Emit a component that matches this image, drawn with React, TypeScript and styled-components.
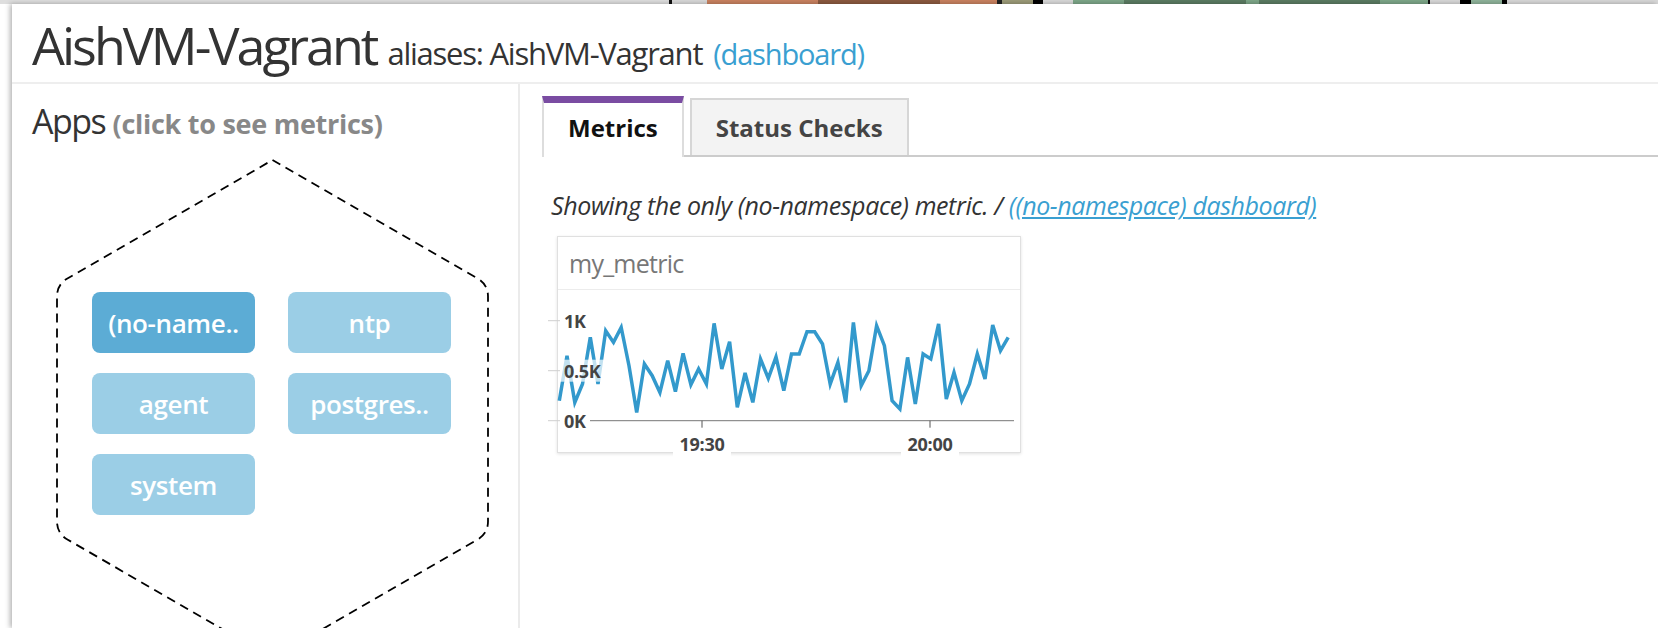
import React from "react";
import styled, { createGlobalStyle } from "styled-components";

const GlobalStyle = createGlobalStyle`
    html, body {
        margin: 0;
        padding: 0;
        background: #fff;
        font-family: "Open Sans", "Noto Sans", sans-serif;
        color: #333;
    }
`;

const Page = styled.div`
    width: 1658px;
    height: 628px;
    overflow: hidden;
    display: flex;
    flex-direction: column;
    background: #fff;
`;

const BackStrip = styled.div`
    display: flex;
    height: 4px;
    flex-shrink: 0;
`;

const StripPiece = styled.div<{ $w: number; $c: string }>`
    width: ${(p) => p.$w}px;
    background: ${(p) => p.$c};
`;

const Panel = styled.div`
    flex: 1;
    margin-left: 12px;
    background: #fff;
    box-shadow: -2px 0 5px rgba(0, 0, 0, 0.3);
    display: flex;
    flex-direction: column;
    min-height: 0;
`;

const Header = styled.div`
    height: 67px;
    padding: 11px 0 0 20px;
    border-bottom: 2px solid #eeeeee;
    display: flex;
    align-items: baseline;
    white-space: nowrap;
`;

const HostName = styled.span`
    font-size: 52px;
    line-height: 60px;
    letter-spacing: -0.057em;
    color: #333;
`;

const Aliases = styled.span`
    font-size: 31px;
    margin-left: 11px;
    letter-spacing: -0.04em;
    color: #333;
`;

const HeaderLink = styled.a`
    font-size: 29px;
    margin-left: 11px;
    letter-spacing: -0.04em;
    color: #3a9fd1;
    text-decoration: none;
`;

const Body = styled.div`
    flex: 1;
    display: flex;
    min-height: 0;
`;

const AppsColumn = styled.div`
    width: 508px;
    flex-shrink: 0;
    border-right: 2px solid #ebebeb;
    padding: 20px 0 0 20px;
    box-sizing: border-box;
`;

const AppsTitle = styled.div`
    font-size: 34px;
    line-height: 34px;
    letter-spacing: -0.045em;
    color: #333;
    white-space: nowrap;
`;

const AppsHint = styled.span`
    font-size: 27px;
    font-weight: 700;
    letter-spacing: -0.01em;
    color: #888;
`;

const Hive = styled.div`
    position: relative;
    width: 433px;
    height: 500px;
    margin: 18px 0 0 24px;
    padding: 133px 0 0 36px;
    box-sizing: border-box;
`;

const HiveOutline = styled.svg`
    position: absolute;
    left: 0;
    top: 0;
    width: 433px;
    height: 500px;
    overflow: visible;
`;

const AppGrid = styled.div`
    position: relative;
    display: grid;
    grid-template-columns: 163px 163px;
    grid-auto-rows: 61px;
    column-gap: 33px;
    row-gap: 20px;
`;

const AppButton = styled.button<{ $active?: boolean }>`
    border: none;
    border-radius: 8px;
    background: ${(p) => (p.$active ? "#5cacd5" : "#9bcee6")};
    color: #fff;
    font-family: "Open Sans", "Noto Sans", sans-serif;
    font-size: 26px;
    font-weight: 600;
    letter-spacing: -0.015em;
    cursor: pointer;
    padding: 0;
`;

const MetricsPane = styled.div`
    flex: 1;
    min-width: 0;
    display: flex;
    flex-direction: column;
`;

const TabBar = styled.div`
    display: flex;
    align-items: flex-end;
    margin: 12px 0 0 22px;
    border-bottom: 2px solid #cccccc;
    height: 59px;
    gap: 6px;
`;

const Tab = styled.div<{ $active?: boolean }>`
    box-sizing: border-box;
    height: ${(p) => (p.$active ? "61px" : "57px")};
    margin-bottom: ${(p) => (p.$active ? "-2px" : "0")};
    padding: 0 24px ${(p) => (p.$active ? "5px" : "0")};
    display: flex;
    align-items: center;
    justify-content: center;
    font-size: 24px;
    font-weight: 700;
    color: ${(p) => (p.$active ? "#111" : "#444")};
    background: ${(p) => (p.$active ? "#fff" : "#f3f3f3")};
    border: 2px solid ${(p) => (p.$active ? "#dddddd" : "#d6d6d6")};
    border-top: ${(p) => (p.$active ? "7px solid #7a4ca2" : "2px solid #d6d6d6")};
    border-bottom: none;
    white-space: nowrap;
`;

const Caption = styled.div`
    margin: 32px 0 0 31px;
    font-size: 25px;
    line-height: 32px;
    font-style: italic;
    letter-spacing: -0.016em;
    color: #333;
    white-space: nowrap;
`;

const CaptionLink = styled.a`
    color: #3a9fd1;
    text-decoration: underline;
`;

const Widget = styled.div`
    margin: 15px 0 0 37px;
    width: 464px;
    height: 217px;
    box-sizing: border-box;
    border: 1px solid #e0e0e0;
    box-shadow: 0 1px 3px rgba(0, 0, 0, 0.12);
    background: #fff;
    display: flex;
    flex-direction: column;
`;

const WidgetTitle = styled.div`
    height: 52px;
    flex-shrink: 0;
    border-bottom: 1px solid #ececec;
    padding-left: 11px;
    display: flex;
    align-items: center;
    font-size: 25px;
    letter-spacing: -0.03em;
    color: #777;
`;

const ChartSvg = styled.svg`
    display: block;
    overflow: visible;
    font-family: "Open Sans", "Noto Sans", sans-serif;
`;

const strip: [number, string][] = [
    [669, "#dedede"], [3, "#111"], [35, "#d8d8d8"], [111, "#c98260"], [122, "#8c5a40"],
    [57, "#c98260"], [5, "#222"], [31, "#9b9a78"], [10, "#000"], [30, "#d8d8d8"],
    [51, "#7da688"], [122, "#5b7b62"], [13, "#7da688"], [121, "#5b7b62"], [48, "#7da688"],
    [2, "#111"], [30, "#d8d8d8"], [11, "#000"], [31, "#8fb39a"], [5, "#000"], [151, "#d8d8d8"],
];

const apps = [
    { name: "(no-name..", active: true },
    { name: "ntp" },
    { name: "agent" },
    { name: "postgres.." },
    { name: "system" },
];

// values sampled off the original graph, 0..1000
const series = [
    200, 650, 183, 367, 833, 367, 900, 783, 933, 550, 83, 567, 450, 283, 600, 290, 673, 360, 517, 367,
    973, 517, 790, 133, 477, 183, 617, 423, 637, 300, 667, 667, 890, 890, 767, 367, 583, 183, 983, 350,
    500, 950, 750, 200, 117, 633, 167, 667, 617, 967, 217, 483, 200, 367, 667, 417, 957, 700, 833,
];

const yOf = (v: number) => 130.7 - v / 10;

function MetricChart() {
    const pts = series.map((v, i) => `${(1.3 + i * 7.74).toFixed(1)},${yOf(v).toFixed(1)}`).join(" ");
    const yTicks = [
        { v: 1000, label: "1K", w: 30 },
        { v: 500, label: "0.5K", w: 46 },
        { v: 0, label: "0K", w: 30 },
    ];
    const xTicks = [
        { x: 144, label: "19:30" },
        { x: 372, label: "20:00" },
    ];
    return (
        <ChartSvg width={462} height={162} viewBox="0 0 462 162">
            <line x1={32} y1={yOf(0)} x2={456} y2={yOf(0)} stroke="#777" strokeWidth={1} />
            {yTicks.map((t) => (
                <line key={t.label} x1={-10} y1={yOf(t.v)} x2={2} y2={yOf(t.v)} stroke="#cfcfcf" strokeWidth={1} />
            ))}
            {xTicks.map((t) => (
                <line key={t.label} x1={t.x} y1={yOf(0)} x2={t.x} y2={yOf(0) + 7} stroke="#555" strokeWidth={1} />
            ))}
            <polyline points={pts} fill="none" stroke="#3399cc" strokeWidth={3.5} strokeLinejoin="miter" />
            {yTicks.map((t) => (
                <g key={t.label}>
                    <rect x={2} y={yOf(t.v) - 11} width={t.w} height={22} fill="#fff" opacity={0.7} />
                    <text x={6} y={yOf(t.v)} dominantBaseline="central" fontSize={18} fontWeight={700} fill="#444" letterSpacing={-0.3}>
                        {t.label}
                    </text>
                </g>
            ))}
            {xTicks.map((t) => (
                <g key={t.label}>
                    <rect x={t.x - 29} y={yOf(0) + 9} width={58} height={27} fill="#fff" />
                    <text x={t.x} y={161} textAnchor="middle" fontSize={18} fontWeight={700} fill="#444" letterSpacing={-0.3}>
                        {t.label}
                    </text>
                </g>
            ))}
        </ChartSvg>
    );
}

export default function App() {
    return (
        <Page>
            <GlobalStyle />
            <BackStrip>
                {strip.map(([w, c], i) => (
                    <StripPiece key={i} $w={w} $c={c} />
                ))}
            </BackStrip>
            <Panel>
                <Header>
                    <HostName>AishVM-Vagrant</HostName>
                    <Aliases>aliases: AishVM-Vagrant</Aliases>
                    <HeaderLink href="#">(dashboard)</HeaderLink>
                </Header>
                <Body>
                    <AppsColumn>
                        <AppsTitle>
                            Apps <AppsHint>(click to see metrics)</AppsHint>
                        </AppsTitle>
                        <Hive>
                            <HiveOutline viewBox="0 0 433 500">
                                <path
                                    d="M 216.5 1 L 421.6 119.5 Q 432 125.5 432 137.5 L 432 362.5 Q 432 374.5 421.6 380.5 L 216.5 499 L 11.4 380.5 Q 1 374.5 1 362.5 L 1 137.5 Q 1 125.5 11.4 119.5 Z"
                                    fill="none"
                                    stroke="#000"
                                    strokeWidth={1.8}
                                    strokeDasharray="9 6"
                                    strokeLinejoin="round"
                                />
                            </HiveOutline>
                            <AppGrid>
                                {apps.map((a) => (
                                    <AppButton key={a.name} $active={a.active}>
                                        {a.name}
                                    </AppButton>
                                ))}
                            </AppGrid>
                        </Hive>
                    </AppsColumn>
                    <MetricsPane>
                        <TabBar>
                            <Tab $active>Metrics</Tab>
                            <Tab>Status Checks</Tab>
                        </TabBar>
                        <Caption>
                            Showing the only (no-namespace) metric. /{" "}
                            <CaptionLink href="#">((no-namespace) dashboard)</CaptionLink>
                        </Caption>
                        <Widget>
                            <WidgetTitle>my_metric</WidgetTitle>
                            <MetricChart />
                        </Widget>
                    </MetricsPane>
                </Body>
            </Panel>
        </Page>
    );
}
